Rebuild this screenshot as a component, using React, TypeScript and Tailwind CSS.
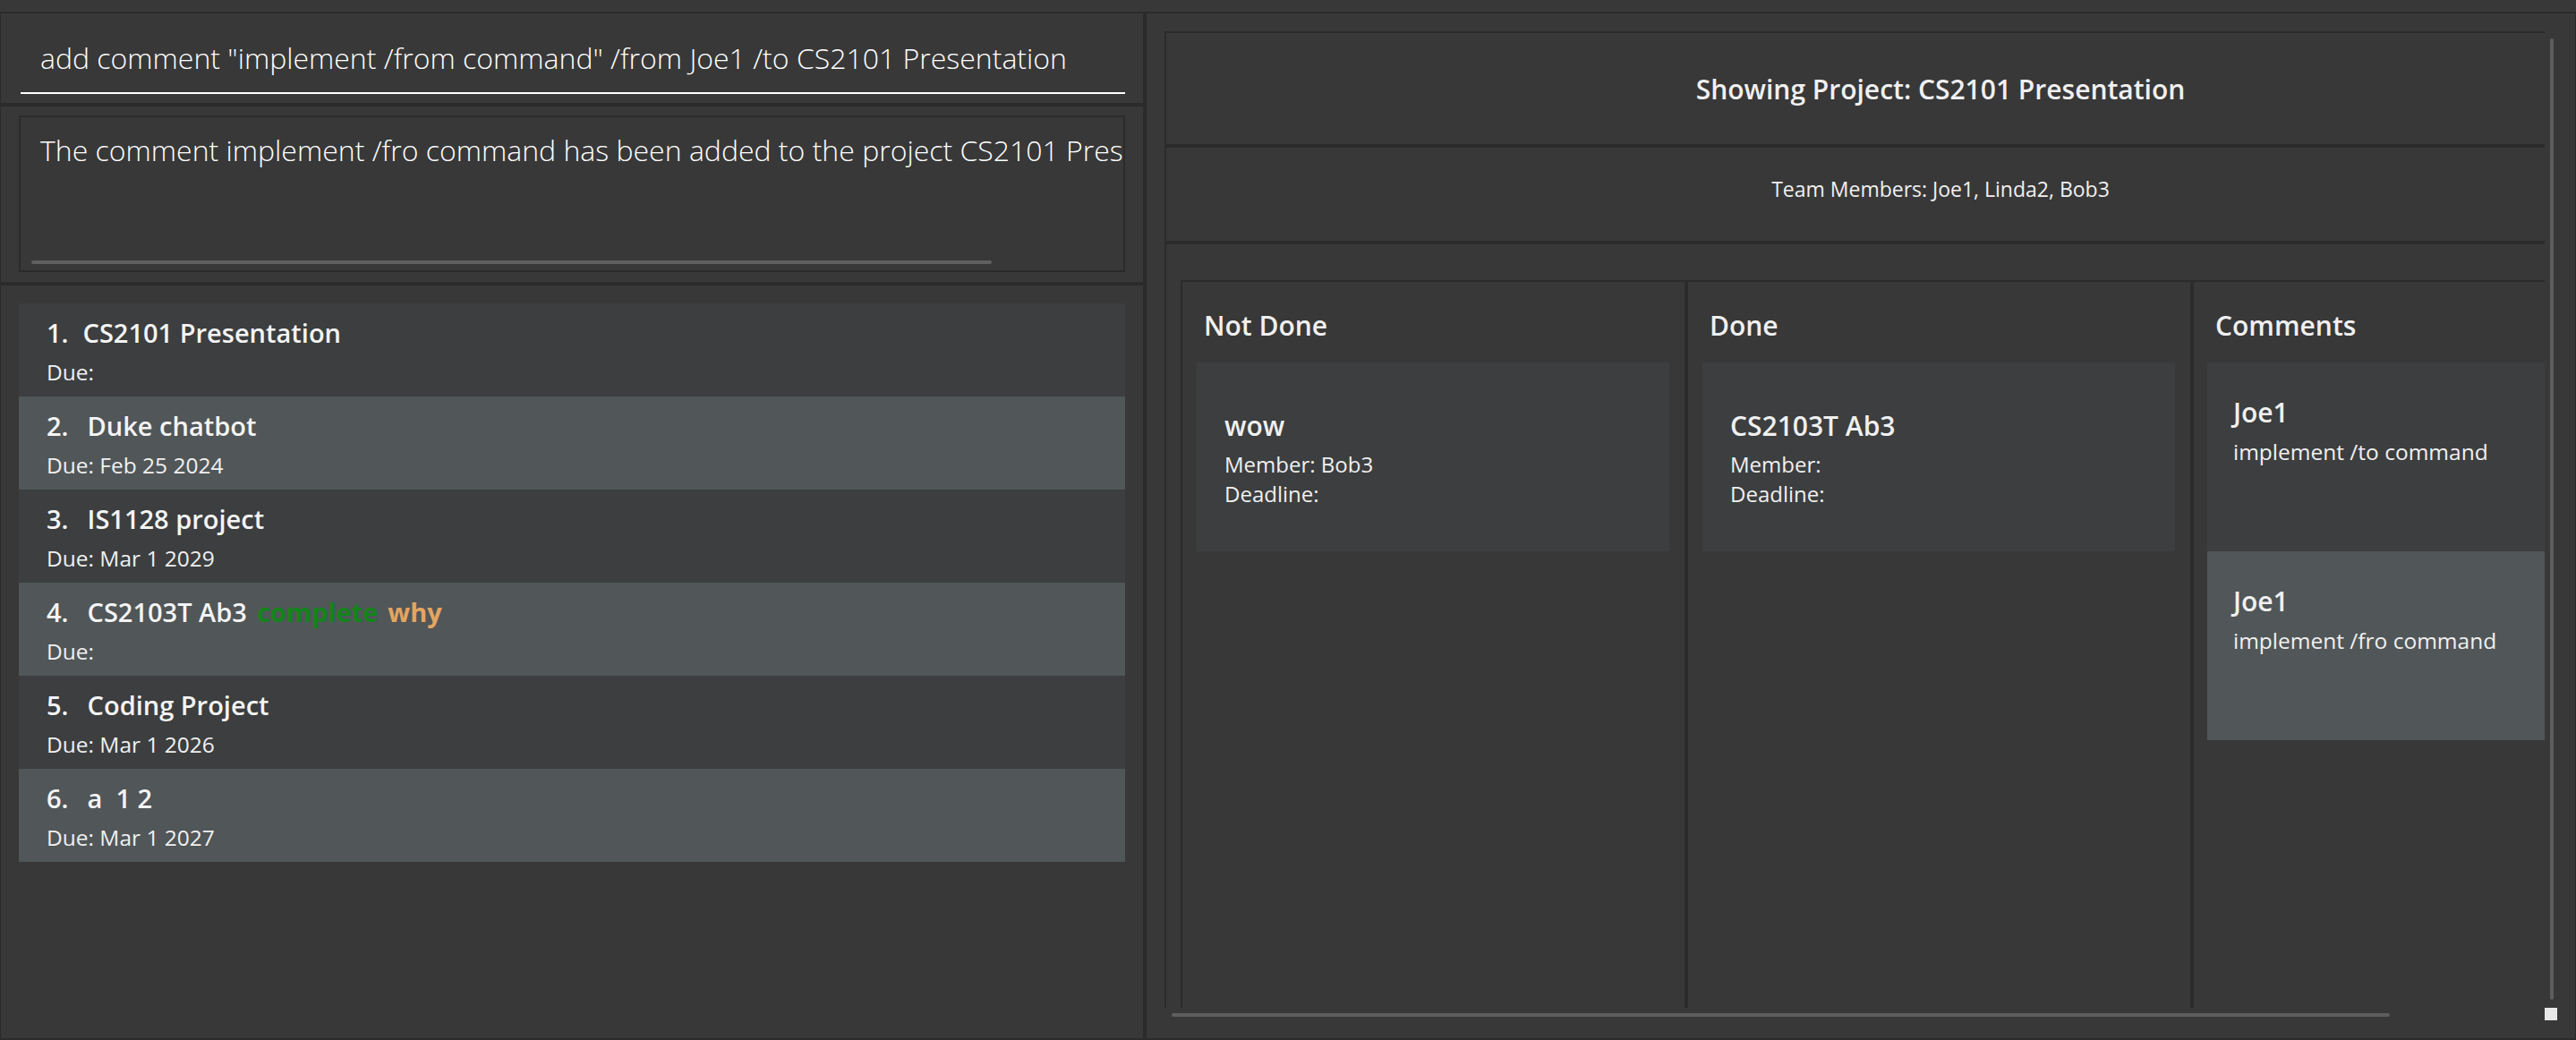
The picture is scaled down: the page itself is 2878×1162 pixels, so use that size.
import React from "react";

const tasks = [
  { n: 1, title: "CS2101 Presentation", due: "Due:", tags: [] as { t: string; c: string }[] },
  { n: 2, title: "Duke chatbot", due: "Due: Feb 25 2024", tags: [] },
  { n: 3, title: "IS1128 project", due: "Due: Mar 1 2029", tags: [] },
  {
    n: 4,
    title: "CS2103T Ab3",
    due: "Due:",
    tags: [
      { t: "complete", c: "text-[#12851a]" },
      { t: "why", c: "text-[#e3a561]" },
    ],
  },
  { n: 5, title: "Coding Project", due: "Due: Mar 1 2026", tags: [] },
  { n: 6, title: "a  1 2", due: "Due: Mar 1 2027", tags: [] },
];

function TaskCell({ task, idx }: { task: (typeof tasks)[number]; idx: number }) {
  return (
    <div
      className={`h-[104px] pl-[31px] pt-[16px] ${idx % 2 === 0 ? "bg-[#3c3e3f]" : "bg-[#515658]"}`}
    >
      <div className="flex items-baseline h-[34px] text-[29px] leading-[34px] font-semibold text-[#f4f4f4] whitespace-pre">
        <span className={task.n === 1 ? "mr-[16px]" : "mr-[21px]"}>{task.n}.</span>
        <span>{task.title}</span>
        {task.tags.map((tg) => (
          <span key={tg.t} className={`ml-[11px] font-bold ${tg.c}`}>
            {tg.t}
          </span>
        ))}
      </div>
      <div className="mt-[12px] text-[24.5px] leading-[30px] text-[#f0f0f0]">{task.due}</div>
    </div>
  );
}

function TaskCard({ title, member }: { title: string; member: string }) {
  return (
    <div className="h-[211px] bg-[#3c3e3f] pl-[31px] pt-[53px] text-[#f0f0f0]">
      <div className="text-[30px] leading-[35px] font-semibold">{title}</div>
      <div className="mt-[9px] text-[24px] leading-[33px]">{member}</div>
      <div className="text-[24px] leading-[33px]">Deadline:</div>
    </div>
  );
}

function CommentCard({ author, text, odd }: { author: string; text: string; odd?: boolean }) {
  return (
    <div
      className={`h-[211px] pl-[29px] pt-[38px] text-[#f0f0f0] whitespace-nowrap ${odd ? "bg-[#515658]" : "bg-[#3c3e3f]"}`}
    >
      <div className="text-[30px] leading-[35px] font-semibold">{author}</div>
      <div className="mt-[12px] text-[24.5px] leading-[30px]">{text}</div>
    </div>
  );
}

function Column({ title, children, pl = "pl-[16px]" }: { title: string; children?: React.ReactNode; pl?: string }) {
  return (
    <div className="w-[565px] shrink-0 h-full border-r-4 border-[#2b2b2b] flex flex-col">
      <div className="h-[90px] pl-[24px] pt-[31px] text-[30px] leading-[35px] font-semibold text-[#f0f0f0]">
        {title}
      </div>
      <div className={`${pl} pr-[17px] flex flex-col`}>{children}</div>
    </div>
  );
}

export default function App() {
  return (
    <div className="w-[2878px] h-[1162px] bg-[#383838] flex flex-col overflow-hidden font-['Open_Sans','Noto_Sans',sans-serif]">
      <div className="h-[13px] shrink-0" />
      <div className="h-[2px] shrink-0 bg-[#2b2b2b]" />
      <div className="flex h-[1145px] shrink-0">
        {/* Left panel */}
        <div className="w-[1277px] shrink-0 border-l border-[#2b2b2b] flex flex-col">
          {/* Command box */}
          <div className="h-[100px] shrink-0 pt-[31px]">
            <div className="pl-[44px] text-[32px] leading-[38px] font-light text-white whitespace-nowrap">
              add comment "implement /from command" /from Joe1 /to CS2101 Presentation
            </div>
            <div className="mt-[19px] ml-[22px] w-[1234px] h-[2px] bg-white" />
          </div>
          <div className="h-[4px] shrink-0 bg-[#2b2b2b]" />
          {/* Result display */}
          <div className="h-[196px] shrink-0 pt-[10px] pl-[20px]">
            <div className="w-[1236px] h-[175px] border-2 border-[#2b2b2b] flex flex-col overflow-hidden">
              <div className="pt-[18px] pl-[22px] pr-[2px] text-[32px] leading-[38px] font-light text-white whitespace-nowrap overflow-hidden">
                The comment implement /fro command has been added to the project CS2101 Presentation
              </div>
              <div className="mt-auto mb-[7px] ml-[12px] w-[1073px] h-[4px] rounded-full bg-[#606060]" />
            </div>
          </div>
          <div className="h-[4px] shrink-0 bg-[#2b2b2b]" />
          {/* Task list */}
          <div className="flex-1 pt-[20px] px-[20px]">
            {tasks.map((t, i) => (
              <TaskCell key={t.n} task={t} idx={i} />
            ))}
          </div>
        </div>
        <div className="w-[4px] shrink-0 bg-[#2b2b2b]" />
        {/* Right panel */}
        <div className="flex-1 border-r border-[#2b2b2b] pt-[20px] pl-[20px]">
          <div className="grid grid-cols-[1542px_14px] grid-rows-[1091px_14px]">
            {/* viewport */}
            <div className="border-t-2 border-l-2 border-[#2b2b2b] overflow-hidden">
              <div className="w-[1730px] flex flex-col">
                <div className="h-[124px] flex items-center justify-center text-[30px] font-semibold text-[#f0f0f0]">
                  Showing Project: CS2101 Presentation
                </div>
                <div className="h-[4px] bg-[#2b2b2b]" />
                <div className="h-[104px] pt-[31px] text-center text-[23px] leading-[30px] text-[#f0f0f0]">
                  Team Members: Joe1, Linda2, Bob3
                </div>
                <div className="h-[4px] bg-[#2b2b2b]" />
                <div className="mt-[40px] ml-[16px] h-[830px] border-t-2 border-l-2 border-[#2b2b2b] flex">
                  <Column title="Not Done">
                    <TaskCard title="wow" member="Member: Bob3" />
                  </Column>
                  <Column title="Done">
                    <TaskCard title="CS2103T Ab3" member="Member:" />
                  </Column>
                  <Column title="Comments" pl="pl-[15px]">
                    <CommentCard author="Joe1" text="implement /to command" />
                    <CommentCard author="Joe1" text="implement /fro command" odd />
                  </Column>
                </div>
              </div>
            </div>
            {/* vertical scrollbar */}
            <div className="pt-[8px] pb-[9px] pl-[6px]">
              <div className="w-[4px] h-full rounded-full bg-[#5e5e5e]" />
            </div>
            {/* horizontal scrollbar */}
            <div className="pt-[6px] pl-[8px]">
              <div className="w-[1361px] h-[4px] rounded-full bg-[#5e5e5e]" />
            </div>
            {/* corner */}
            <div className="bg-[#e8e8e8]" />
          </div>
        </div>
      </div>
      <div className="h-[2px] shrink-0 bg-[#2b2b2b]" />
    </div>
  );
}
